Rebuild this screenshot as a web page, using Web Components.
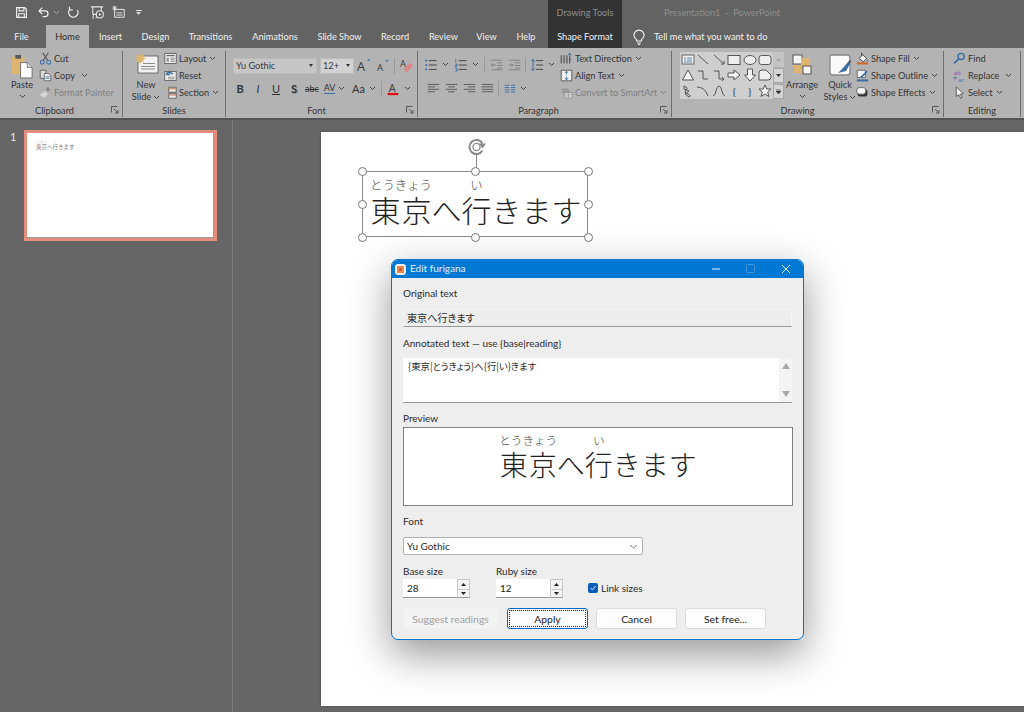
<!DOCTYPE html>
<html lang="en">
<head>
<meta charset="utf-8">
<title>Presentation1 - PowerPoint</title>
<style>
  html, body { margin: 0; height: 100%; overflow: hidden; background: #666; }
  body { font-family: Lato, "Noto Sans CJK JP", sans-serif; }
</style>
</head>
<body>
<ppt-app></ppt-app>
<script>
const UI_FONT = 'Lato, "Noto Sans CJK JP", sans-serif';
const UI_SIZE = '9.2px';
const DLG_SIZE = '10px';
const BLUE = '#3c6ea5', DK = '#3a3a3a', TAN = '#dcb670';

// all 16x16 unless noted
const ICONS = {
  save: `<path d="M2 2h10l2 2v10H2z" fill="none" stroke="#f2f2f2" stroke-width="1.4"/><path d="M5 2.500v3.500h6V2.500M4.500 14V9.500h7V14" fill="none" stroke="#f2f2f2" stroke-width="1.300"/>`,
  undo: `<path d="M3 6h7a3.500 3.500 0 0 1 0 7H7" fill="none" stroke="#f2f2f2" stroke-width="1.500"/><path d="M6.500 2L2.500 6l4 4" fill="none" stroke="#f2f2f2" stroke-width="1.500"/>`,
  redo: `<path d="M4 3.500A5.800 5.800 0 1 0 12.800 5" fill="none" stroke="#f2f2f2" stroke-width="1.500"/><path d="M3 1v4h4" fill="none" stroke="#f2f2f2" stroke-width="1.300"/>`,
  present: `<path d="M1 2h13M3 2v8h4M12 2v4" fill="none" stroke="#e8e8e8" stroke-width="1.100"/><circle cx="10.500" cy="10" r="3.800" fill="none" stroke="#e8e8e8" stroke-width="1.100"/><path d="M9.500 8.200l2.800 1.800-2.800 1.800z" fill="#e8e8e8"/><path d="M6 13.500h2M4 10l-1 5" stroke="#e8e8e8" fill="none"/>`,
  qat: `<path d="M3 5h11v9H3z" fill="none" stroke="#e8e8e8" stroke-width="1.100"/><path d="M5 9h7M5 11.500h7" stroke="#e8e8e8"/><path d="M3 1v5M.5 3.500h5" stroke="#e8e8e8" stroke-width="1.100"/><path d="M1 1l4 5M5 1L1 6" stroke="#e8e8e8" stroke-width=".7"/>`,
  paste: `<rect x="1" y="3" width="13" height="18" rx="1" fill="${TAN}"/><rect x="4.500" y="1" width="6" height="4" fill="#5a5a5a"/><path d="M10 9h7l5 5v11H10z" fill="#fff" stroke="#555" stroke-width=".8"/><path d="M17 9v5h5" fill="#ddd" stroke="#555" stroke-width=".8"/>`,
  cut: `<path d="M4.500 1l6 9M11.500 1l-6 9" stroke="#555" stroke-width="1.300"/><circle cx="4" cy="12.500" r="2.400" fill="none" stroke="${BLUE}" stroke-width="1.300"/><circle cx="12" cy="12.500" r="2.400" fill="none" stroke="${BLUE}" stroke-width="1.300"/>`,
  copy: `<path d="M1.500 1.500h7v10h-7z" fill="#ddd" stroke="#555"/><path d="M6.500 5.500h5l3 3v6h-8z" fill="#f2f2f2" stroke="#555"/><path d="M8 9.500h5M8 11.500h5" stroke="${BLUE}"/>`,
  painter: `<path d="M1 11l6-5 4 4-5 4z" fill="#d8d8d8"/><path d="M8 4l3-3 3 3-3 3z" fill="#8a8a8a"/>`,
  newslide: `<rect x="3" y="3" width="20" height="17" fill="#f2f2f2" stroke="#555" stroke-width=".8"/><path d="M8 10.500h12M6 13.500h14M6 16h14" stroke="#8a8a8a"/><path d="M5 0l1.500 2.500L9 1.500 8 4l2.500 1.500L8 7l1 2.500-2.500-1L5 11 3.500 8.500 1 9.500 2 7-.5 5.500 2 4 1 1.500l2.500 1z" fill="${TAN}"/>`,
  layout: `<rect x="1" y="2" width="14" height="12" fill="#efefef" stroke="#555"/><path d="M3 4.500h10" stroke="#555" stroke-width="1.300"/><path d="M3 7h3v5H3z" fill="#999"/><path d="M8 7.500h5M8 9.500h5M8 11.500h5" stroke="#777"/>`,
  reset: `<rect x="1" y="3" width="14" height="11" fill="#efefef" stroke="#555"/><path d="M3 6a4 4 0 0 1 6-1l2 1.500" fill="none" stroke="${BLUE}" stroke-width="1.800"/><path d="M6.500 2v5h-4" fill="none" stroke="${BLUE}" stroke-width="1.500"/><path d="M5 10h8M5 12h8" stroke="#888"/>`,
  section: `<rect x="6" y="1.500" width="9" height="6" fill="#efefef" stroke="#555"/><rect x="6" y="9" width="9" height="6" fill="#efefef" stroke="#555"/><path d="M6 3.500h9M6 11h9" stroke="#c36a3c" stroke-width="1.200"/><path d="M1 2h4M1 4h3" stroke="${TAN}" stroke-width="1.400"/>`,
  growA: `<text x="0" y="14" font-size="13.500" font-family="Open Sans" fill="${DK}">A</text><path d="M10.500 3l2-2 2 2z" fill="${BLUE}"/>`,
  shrinkA: `<text x="1" y="14" font-size="11" font-family="Open Sans" fill="${DK}">A</text><path d="M10.500 1l2 2 2-2z" fill="${BLUE}"/>`,
  eraser: `<text x="1" y="10" font-size="10" font-family="Open Sans" fill="${DK}">A</text><path d="M5 12l6-7 4 3-6 7H7z" fill="#d88a8a"/>`,
  colorA: `<text x="3" y="11.500" font-size="12.500" font-family="Open Sans" fill="${DK}">A</text><rect x="2" y="12.500" width="12" height="2.500" fill="#e60012"/>`,
  bullets: `<path d="M5.500 3h9M5.500 8h9M5.500 13h9" stroke="#444" stroke-width="1.100"/><path d="M1.500 2h2v2h-2zM1.500 7h2v2h-2zM1.500 12h2v2h-2z" fill="${BLUE}"/>`,
  numbers: `<path d="M5.500 3h9M5.500 8h9M5.500 13h9" stroke="#444" stroke-width="1.100"/><path d="M2 1v4M1.500 7h2v1.500h-2V10h2M1.500 12h2v3h-2" fill="none" stroke="${BLUE}"/>`,
  outdent: `<path d="M1 2.500h13M8 5.500h6M8 8.500h6M8 11.500h6M1 13.500h13" stroke="#7d7d7d"/><path d="M6.500 8H1.500M3.500 6l-2 2 2 2" fill="none" stroke="#7d7d7d"/>`,
  indent: `<path d="M1 2.500h13M8 5.500h6M8 8.500h6M8 11.500h6M1 13.500h13" stroke="#7d7d7d"/><path d="M1 8h5M4 6l2 2-2 2" fill="none" stroke="#7d7d7d"/>`,
  spacing: `<path d="M7 3h8M7 8h8M7 13h8" stroke="#444" stroke-width="1.100"/><path d="M3.500 2v12M1.500 4l2-2.500 2 2.500M1.500 12l2 2.500 2-2.500" fill="none" stroke="${BLUE}" stroke-width="1.100"/>`,
  left: `<path d="M1 3h14M1 6h9M1 9h14M1 12h9" stroke="#555" stroke-width="1.100"/>`,
  center: `<path d="M1 3h14M4 6h8M1 9h14M4 12h8" stroke="#555" stroke-width="1.100"/>`,
  right: `<path d="M1 3h14M6 6h9M1 9h14M6 12h9" stroke="#555" stroke-width="1.100"/>`,
  justify: `<path d="M1 3h14M1 6h14M1 9h14M1 12h14" stroke="#555" stroke-width="1.100"/>`,
  cols: `<path d="M1 3h6M9 3h6M1 6h6M9 6h6M1 9h6M9 9h6M1 12h6M9 12h6" stroke="${BLUE}" stroke-width="1.200"/>`,
  textdir: `<path d="M1.500 4v10M5 4v10M8.500 4v10M12 5v9" stroke="#333" stroke-width="1.100"/><path d="M9.500 4l2.500-3 2.500 3" fill="${BLUE}"/><path d="M11 9h3" stroke="${BLUE}"/>`,
  aligntext: `<path d="M1.500 1.500h13v13h-13" fill="#f2f2f2" stroke="#444"/><path d="M1.500 1.500v13" stroke="#444"/><path d="M8 3v4M8 9v4M6 5l2-2.500L10 5M6 11l2 2.500 2-2.500" fill="none" stroke="${BLUE}"/>`,
  smartart: `<path d="M1 3h8l3 3-3 3H1l2-3z" fill="#9a9a9a"/><rect x="6" y="8" width="9" height="7" fill="#d8d8d8" stroke="#8a8a8a"/><path d="M8 10.500h5M8 12.500h5M10.500 9v5" stroke="#8a8a8a" stroke-width=".7"/>`,
  arrange: `<rect x="1" y="1" width="9" height="9" fill="#f6f6f6" stroke="#555"/><rect x="9" y="4" width="9" height="8" fill="${TAN}"/><rect x="2" y="11" width="7" height="8" fill="${TAN}"/><rect x="11" y="12" width="8" height="8" fill="#f6f6f6" stroke="#555"/>`,
  quick: `<path d="M3 1h15q3 0 3 3v14q0 3-3 3H4q-3 0-3-3V3q0-2 2-2z" fill="#fafafa" stroke="#888" stroke-width="1.300"/><path d="M9 19l5-5 5-6 2 2-4 7z" fill="${BLUE}"/><path d="M19 8l2-2 1 1-2 3z" fill="#444"/>`,
  fill: `<path d="M4 8l4-5 5 5-4 4z" fill="#f4f4f4" stroke="#333"/><path d="M7 1v4" stroke="#333"/><path d="M14 9q1 2 0 3t-1-1z" fill="${BLUE}"/><rect x="1" y="12.800" width="14" height="2.500" fill="#d0672a"/>`,
  outline: `<path d="M1.500 1.500h10v9h-10z" fill="#f0f0f0" stroke="#555"/><path d="M6 9l7-7 1.500 1.500-7 7-2 .5z" fill="${BLUE}"/><rect x="1" y="12.800" width="14" height="2.500" fill="${BLUE}"/>`,
  effects: `<rect x="2" y="4" width="12" height="9" rx="3" fill="#333"/><rect x="1" y="2" width="11" height="8" rx="3" fill="#f6f6f6" stroke="#555"/>`,
  find: `<circle cx="10" cy="5.500" r="3.800" fill="none" stroke="${BLUE}" stroke-width="1.800"/><path d="M7 8.500L1.500 14" stroke="${BLUE}" stroke-width="2.200"/>`,
  replace: `<text x="1" y="7" font-size="7.500" font-family="Open Sans" fill="#8a4fa0">ab</text><text x="6" y="16" font-size="7.500" font-family="Open Sans" fill="${BLUE}">ac</text><path d="M0 11h4M2.500 9l2 2-2 2" fill="none" stroke="${BLUE}"/>`,
  select: `<path d="M4 1v12l3-2.500L9.500 15l1.800-1-2.300-4 3.500-.5z" fill="#f4f4f4" stroke="#444"/>`,
  launcher: `<path d="M.5 .5h6M.5 .5v6" stroke="#555" fill="none"/><path d="M3 3l4 4M7 4v3H4" stroke="#555" fill="none"/>`,
  chev: `<path d="M1 1l2.500 2.500L6 1" fill="none" stroke="currentColor" stroke-width="1"/>`,
  bulb: `<path d="M4.500 10.500a5 5 0 1 1 5 0v1.500h-5z" fill="none" stroke="#efefef" stroke-width="1.100"/><path d="M5 14h4M6 15.500h2" stroke="#efefef"/>`
};

function iconSvg(name, size, box) {
  const b = box || size || 16, s = size || 16;
  return `<svg width="${s}" height="${s}" viewBox="0 0 ${b} ${b}" style="display:block;overflow:visible">${ICONS[name]}</svg>`;
}
const chevSvg = `<svg width="7" height="5" viewBox="0 0 7 5" style="display:block">${ICONS.chev}</svg>`;

class PptApp extends HTMLElement {
  constructor() { super(); this.attachShadow({ mode: 'open' }); }
  connectedCallback() {
    this.shadowRoot.innerHTML = `
      <style>
        :host { display: flex; flex-direction: column; width: 1024px; height: 712px; overflow: hidden; background: #666; position: relative; font-family: ${UI_FONT}; }
        .work { flex: 1; display: flex; min-height: 0; }
      </style>
      <ppt-titlebar></ppt-titlebar>
      <ppt-tabs></ppt-tabs>
      <ppt-ribbon></ppt-ribbon>
      <div class="work">
        <slide-panel></slide-panel>
        <slide-stage></slide-stage>
      </div>
      <furigana-dialog></furigana-dialog>`;
  }
}

class PptTitlebar extends HTMLElement {
  constructor() { super(); this.attachShadow({ mode: 'open' }); }
  connectedCallback() {
    this.shadowRoot.innerHTML = `
      <style>
        :host { display: flex; height: 24px; background: #636363; align-items: center; font-size: ${UI_SIZE}; color: #8f8f8f; }
        .qat { width: 548px; display: flex; align-items: center; padding-left: 15px; box-sizing: border-box; color: #ccc; }
        .qat > * { flex: none; }
        .tools { width: 74px; height: 100%; background: #333; color: #8e8e8e; display: flex; align-items: center; justify-content: center; }
        .doc { margin-left: 42px; }
      </style>
      <div class="qat">
        <span style="width:13px">${iconSvg('save', 13, 16)}</span>
        <span style="width:13px;margin-left:9px">${iconSvg('undo', 13, 16)}</span>
        <span style="margin-left:3px;color:#aaa">${chevSvg}</span>
        <span style="width:13px;margin-left:7px">${iconSvg('redo', 13, 16)}</span>
        <span style="width:15px;margin-left:10px">${iconSvg('present', 15, 16)}</span>
        <span style="width:14px;margin-left:7px">${iconSvg('qat', 14, 16)}</span>
        <span style="margin-left:10px;width:6px;height:5px;display:block;border-top:1px solid #ddd;position:relative;top:1px"><svg width="5" height="3" style="display:block;margin-top:1px"><path d="M0 0h5L2.500 3z" fill="#ddd"/></svg></span>
      </div>
      <div class="tools">Drawing Tools</div>
      <div class="doc">Presentation1&nbsp; -&nbsp; PowerPoint</div>`;
  }
}

class PptTabs extends HTMLElement {
  constructor() { super(); this.attachShadow({ mode: 'open' }); }
  connectedCallback() {
    const tabs = [['File', 43], ['Home', 43, 1], ['Insert', 43], ['Design', 47], ['Transitions', 63], ['Animations', 66], ['Slide Show', 63], ['Record', 48], ['Review', 49], ['View', 37], ['Help', 42]];
    const html = tabs.map(([t, w, on]) => `<span class="tab${on ? ' on' : ''}" style="width:${w}px">${t}</span>`).join('');
    this.shadowRoot.innerHTML = `
      <style>
        :host { display: flex; height: 24px; background: #636363; color: #f0f0f0; font-size: ${UI_SIZE}; align-items: stretch; }
        .tabs { width: 548px; display: flex; align-items: stretch; flex: none; }
        .tab { white-space: nowrap; display: flex; align-items: center; justify-content: center; flex: none; }
        .on { margin-left: 3px; margin-top: 1px; background: #b3b3b3; color: #2e2e2e; }
        .fmt { width: 74px; flex: none; background: #333; display: flex; align-items: center; justify-content: center; white-space: nowrap; }
        .tell { display: flex; align-items: center; margin-left: 10px; white-space: nowrap; }
        .tell svg { margin-right: 8px; }
      </style>
      <div class="tabs">${html}</div>
      <div class="fmt">Shape Format</div>
      <div class="tell">${iconSvg('bulb', 14, 14)}<span>Tell me what you want to do</span></div>`;
  }
}

// small row: icon + label + optional chevron
class RbBtn extends HTMLElement {
  constructor() { super(); this.attachShadow({ mode: 'open' }); }
  connectedCallback() {
    const off = this.hasAttribute('off');
    this.shadowRoot.innerHTML = `
      <style>
        :host { display: flex; flex: none; align-items: center; height: 17px; white-space: nowrap; color: ${off ? '#7f7f7f' : '#333'}; font-size: ${UI_SIZE}; }
        .i { width: 13px; flex: none; margin-right: 2px; }
        .c { margin-left: ${this.getAttribute('cg') || 3}px; color: ${off ? '#7f7f7f' : '#444'}; }
      </style>
      <span class="i">${iconSvg(this.getAttribute('icon'), 13, 16)}</span>
      <span><slot></slot></span>
      ${this.hasAttribute('chev') ? `<span class="c">${chevSvg}</span>` : ''}`;
  }
}

// tall button: icon on top, one or two text lines, chevron
class RbLarge extends HTMLElement {
  constructor() { super(); this.attachShadow({ mode: 'open' }); }
  connectedCallback() {
    const s = +this.getAttribute('size'), b = +this.getAttribute('box');
    const two = this.getAttribute('two');
    this.shadowRoot.innerHTML = `
      <style>
        :host { display: flex; flex-direction: column; align-items: center; color: #333; font-size: ${UI_SIZE}; line-height: 12px; white-space: nowrap; height: 51px; width: ${this.getAttribute('w')}px; flex: none; }
        .i { height: 24px; flex: none; margin-top: ${this.getAttribute('top') || 0}px; }
        .l { margin-top: ${this.getAttribute('lt') || 1}px; }
        .r { display: flex; align-items: center; gap: 2px; height: 12px; color: #444; }
      </style>
      <div class="i">${iconSvg(this.getAttribute('icon'), s, b)}</div>
      <div class="l"><slot></slot></div>
      <div class="r">${two ? `<span style="color:#333">${two}</span>` : ''}${chevSvg}</div>`;
  }
}

// single icon cell for the font and paragraph rows
class RbTool extends HTMLElement {
  constructor() { super(); this.attachShadow({ mode: 'open' }); }
  connectedCallback() {
    const name = this.getAttribute('icon');
    const w = this.getAttribute('w') || 18;
    this.shadowRoot.innerHTML = `
      <style>
        :host { display: flex; align-items: center; justify-content: center; gap: 2px; height: 17px; width: ${w}px; flex: none; color: #333; font-size: 11px; font-weight: ${this.getAttribute('fw') || 400}; font-style: ${this.getAttribute('fs') || 'normal'}; text-decoration: ${this.getAttribute('td') || 'none'}; white-space: nowrap; }
        .c { color: #444; margin-left: 2px; }
      </style>
      ${name ? iconSvg(name, +(this.getAttribute('iw') || 13), 16) : '<slot></slot>'}
      ${this.hasAttribute('chev') ? `<span class="c">${chevSvg}</span>` : ''}`;
  }
}

class RbGroup extends HTMLElement {
  constructor() { super(); this.attachShadow({ mode: 'open' }); }
  connectedCallback() {
    const launcher = this.hasAttribute('launcher');
    this.shadowRoot.innerHTML = `
      <style>
        :host { display: flex; flex-direction: column; flex: none; box-sizing: border-box; position: relative; height: 66px; margin-top: 3px; border-right: 1px solid #6e6e6e; width: ${this.getAttribute('w')}px; }
        .body { flex: 1; min-height: 0; display: flex; padding-left: ${this.getAttribute('pl') || 0}px; }
        .cap { height: 15px; line-height: 18px; text-align: center; color: #333; font-size: ${UI_SIZE}; padding-right: ${this.getAttribute('cr') || 0}px; }
        .launch { position: absolute; right: 3px; bottom: 3px; width: 8px; height: 8px; }
      </style>
      <div class="body"><slot></slot></div>
      <div class="cap">${this.getAttribute('label')}</div>
      ${launcher ? `<span class="launch">${iconSvg('launcher', 8, 8)}</span>` : ''}`;
  }
}

class PptRibbon extends HTMLElement {
  constructor() { super(); this.attachShadow({ mode: 'open' }); }
  connectedCallback() {
    const shapes = [
      '<rect x="1" y="2" width="12" height="9" fill="#efefef" stroke="#666"/><path d="M3 5h2M3 7h2M6 5h5M6 7h5M3 9h8" stroke="'+BLUE+'" stroke-width=".8"/>',
      '<path d="M2 2l10 9" stroke="#555"/>',
      '<path d="M2 2l10 9M12 8v3H9" stroke="#555" fill="none"/>',
      '<rect x="1" y="2.500" width="12" height="9" fill="#efefef" stroke="#555"/>',
      '<ellipse cx="7" cy="7" rx="6" ry="4.500" fill="#efefef" stroke="#555"/>',
      '<rect x="1" y="2.500" width="12" height="9" rx="2.500" fill="#efefef" stroke="#555"/>',
      '<path d="M7 2l5.500 10h-11z" fill="#f4f4f4" stroke="#555"/>',
      '<path d="M2 3h5v8h5" fill="none" stroke="#555"/>',
      '<path d="M2 3h5v8h5M10 9l2 2-2 2" fill="none" stroke="#555"/>',
      '<path d="M1 5h6V2l6 5-6 5V9H1z" fill="#f4f4f4" stroke="#555"/>',
      '<path d="M4.500 1h5v6h3L7 13 1.500 7h3z" fill="#f4f4f4" stroke="#555"/>',
      '<path d="M1 12V5q0-3 3-3h4l5 5v2q0 3-3 3z" fill="#efefef" stroke="#555"/>',
      '<path d="M3 2q5 2 2 4t2 4q4 2 1 3L4 10 8 7 3 5z" fill="none" stroke="#555"/>',
      '<path d="M1 3q8 0 11 9" fill="none" stroke="#555"/>',
      '<path d="M1 12q2 0 3-5t3-5 3 5 3 5" fill="none" stroke="#555"/>',
      'L', 'R',
      '<path d="M7 1l1.800 4h4.200l-3.300 3 1.200 4.500L7 10l-3.900 2.500L4.300 8 1 5h4.200z" fill="#f4f4f4" stroke="#555"/>'
    ];
    const gallery = shapes.map(s => {
      if (s === 'L') return '<span class="cell t">{</span>';
      if (s === 'R') return '<span class="cell t">}</span>';
      return `<span class="cell"><svg width="14" height="14" viewBox="0 0 14 14">${s}</svg></span>`;
    }).join('');
    this.shadowRoot.innerHTML = `
      <style>
        :host { display: flex; height: 70px; background: #b3b3b3; border-bottom: 2px solid #545454; box-sizing: content-box; font-size: ${UI_SIZE}; color: #333; }
        .col { display: flex; flex-direction: column; }
        .stack { margin-top: -1px; }
        .row { display: flex; align-items: center; }
        .combo { height: 16px; box-sizing: border-box; background: #d2d2d2; border: 1px solid #bdbdbd; display: flex; align-items: center; justify-content: space-between; padding: 0 3px 0 2px; font-size: ${UI_SIZE}; color: #3a3a3a; flex: none; }
        .tri { width: 0; height: 0; border: 2.500px solid transparent; border-top: 3px solid #333; border-bottom: 0; }
        .vsep { width: 1px; height: 16px; background: #999; flex: none; }
        .gal { display: grid; grid-template-columns: repeat(6, 15.500px); grid-auto-rows: 15.500px; background: #cfcfcf; width: 93px; height: 47px; flex: none; margin-top: 1px; }
        .cell { display: flex; align-items: center; justify-content: center; font-size: 10px; color: #333; }
        .gs { width: 11px; height: 47px; margin-top: 1px; display: grid; grid-template-rows: repeat(3, 1fr); gap: 1px; flex: none; }
        .gs span { background: #c4c4c4; display: flex; align-items: center; justify-content: center; }
        .gs span:nth-child(2), .gs span:nth-child(3) { background: #d4d4d4; border: 1px solid #a6a6a6; box-sizing: border-box; }
        svg { display: block; }
      </style>

      <rb-group w="123" label="Clipboard" launcher cr="13">
        <rb-large w="44" icon="paste" size="22" box="23" top="3">Paste</rb-large>
        <div class="col stack" style="margin-left:-5px">
          <rb-btn icon="cut">Cut</rb-btn>
          <rb-btn icon="copy" chev cg="6">Copy</rb-btn>
          <rb-btn icon="painter" off>Format Painter</rb-btn>
        </div>
      </rb-group>

      <rb-group w="103" label="Slides" pl="1">
        <rb-large w="44" icon="newslide" size="23" box="23" two="Slide" top="2" lt="2">New</rb-large>
        <div class="col stack" style="margin-left:-4px">
          <rb-btn icon="layout" chev>Layout</rb-btn>
          <rb-btn icon="reset">Reset</rb-btn>
          <rb-btn icon="section" chev>Section</rb-btn>
        </div>
      </rb-group>

      <rb-group w="192" label="Font" launcher cr="10" pl="7">
        <div class="col" style="padding-top:6px">
          <div class="row" style="gap:3px">
            <span class="combo" style="width:84px;background:#c6c6c6"><span>Yu Gothic</span><span class="tri"></span></span>
            <span class="combo" style="width:34px"><span>12+</span><span class="tri"></span></span>
            <rb-tool icon="growA" iw="15" style="margin-left:-2px"></rb-tool>
            <rb-tool icon="shrinkA" iw="14" style="margin-left:-2px"></rb-tool>
            <span class="vsep" style="margin-left:-1px"></span>
            <rb-tool icon="eraser" iw="15" style="margin-left:-1px"></rb-tool>
          </div>
          <div class="row" style="margin-top:6px;margin-left:-2px">
            <rb-tool fw="700">B</rb-tool>
            <rb-tool fs="italic">I</rb-tool>
            <rb-tool td="underline">U</rb-tool>
            <rb-tool fw="700" style="text-shadow:1px 1px 0 #888">S</rb-tool>
            <rb-tool style="font-size:9px;text-decoration:line-through">abc</rb-tool>
            <rb-tool w="17"><span style="font-size:9px;border-bottom:1px solid ${BLUE};line-height:10px">AV</span></rb-tool>
            <span style="color:#444">${chevSvg}</span>
            <rb-tool w="28" style="margin-left:5px" chev>Aa</rb-tool>
            <span class="vsep" style="margin-left:3px"></span>
            <rb-tool icon="colorA" iw="14" style="margin-left:4px" chev w="25"></rb-tool>
          </div>
        </div>
      </rb-group>

      <rb-group w="254" label="Paragraph" launcher cr="12" pl="6">
        <div class="col" style="padding-top:5px;width:134px;flex:none">
          <div class="row">
            <rb-tool icon="bullets" iw="14" w="25" chev></rb-tool>
            <rb-tool icon="numbers" iw="14" w="25" chev style="margin-left:5px"></rb-tool>
            <span class="vsep" style="margin-left:5px"></span>
            <rb-tool icon="outdent" iw="14" style="margin-left:3px"></rb-tool>
            <rb-tool icon="indent" iw="14"></rb-tool>
            <span class="vsep" style="margin-left:1px"></span>
            <rb-tool icon="spacing" iw="14" w="25" style="margin-left:4px" chev></rb-tool>
          </div>
          <div class="row" style="margin-top:7px">
            <rb-tool icon="left" iw="13"></rb-tool>
            <rb-tool icon="center" iw="13"></rb-tool>
            <rb-tool icon="right" iw="13"></rb-tool>
            <rb-tool icon="justify" iw="13"></rb-tool>
            <span class="vsep" style="margin-left:2px"></span>
            <rb-tool icon="cols" iw="12" w="23" style="margin-left:5px" chev></rb-tool>
          </div>
        </div>
        <div class="col stack" style="margin-left:2px">
          <rb-btn icon="textdir" chev>Text Direction</rb-btn>
          <rb-btn icon="aligntext" chev>Align Text</rb-btn>
          <rb-btn icon="smartart" off chev>Convert to SmartArt</rb-btn>
        </div>
      </rb-group>

      <rb-group w="272" label="Drawing" launcher cr="20" pl="8">
        <div class="gal">${gallery}</div>
        <div class="gs">
          <span><svg width="5" height="3"><path d="M0 3h5L2.500 0z" fill="#a0a0a0"/></svg></span>
          <span><svg width="5" height="3"><path d="M0 0h5L2.500 3z" fill="#333"/></svg></span>
          <span><svg width="5" height="5"><path d="M0 0h5M0 2h5L2.500 5z" stroke="#333" stroke-width=".6" fill="#333"/></svg></span>
        </div>
        <rb-large w="38" icon="arrange" size="20" box="20" top="3" style="margin-left:-1px">Arrange</rb-large>
        <rb-large w="38" icon="quick" size="23" box="23" top="3" two="Styles">Quick</rb-large>
        <div class="col stack" style="margin-left:-3px">
          <rb-btn icon="fill" chev>Shape Fill</rb-btn>
          <rb-btn icon="outline" chev>Shape Outline</rb-btn>
          <rb-btn icon="effects" chev>Shape Effects</rb-btn>
        </div>
      </rb-group>

      <rb-group w="77" label="Editing" pl="9">
        <div class="col stack">
          <rb-btn icon="find">Find</rb-btn>
          <rb-btn icon="replace" chev cg="6">Replace</rb-btn>
          <rb-btn icon="select" chev>Select</rb-btn>
        </div>
      </rb-group>`;
  }
}

class SlidePanel extends HTMLElement {
  constructor() { super(); this.attachShadow({ mode: 'open' }); }
  connectedCallback() {
    this.shadowRoot.innerHTML = `
      <style>
        :host { display: flex; width: 233px; flex: none; box-sizing: border-box; border-right: 1px solid #7d7d7d; background: #666; padding: 10px 0 0 10px; align-items: flex-start; }
        .n { color: #e4e4e4; font-size: 11px; width: 14px; line-height: 14px; }
        .thumb { width: 193px; height: 111px; box-sizing: border-box; border: 3px solid #e58d7c; background: #fff; box-shadow: inset -1px -1px 0 #9a9a9a; padding: 11px 0 0 9px; font-size: 5.500px; line-height: 7px; color: #777; font-family: "Noto Sans CJK JP", sans-serif; }
        rt { font-size: 2.200px; color: #aaa; }
      </style>
      <span class="n">1</span>
      <div class="thumb"><ruby>東京<rt>とうきょう</rt></ruby>へ<ruby>行<rt>い</rt></ruby>きます</div>`;
  }
}

class RubyLine extends HTMLElement {
  constructor() { super(); this.attachShadow({ mode: 'open' }); }
  connectedCallback() {
    const base = this.getAttribute('base'), rt = this.getAttribute('rt'), up = this.getAttribute('up');
    this.shadowRoot.innerHTML = `
      <style>
        :host { display: block; font-family: "Noto Sans CJK JP", sans-serif; font-weight: 300; color: #222; white-space: nowrap; line-height: 1; font-size: ${base}px; }
        rt { font-size: ${rt}px; color: #444; font-weight: 300; line-height: 1.2; position: relative; top: -${up}px; }
      </style>
      <ruby>東京<rt>とうきょう</rt></ruby>へ<ruby>行<rt>い</rt></ruby>きます`;
  }
}

class SlideStage extends HTMLElement {
  constructor() { super(); this.attachShadow({ mode: 'open' }); }
  connectedCallback() {
    const pts = [[0,0],[113,0],[226,0],[0,33],[226,33],[0,66],[113,66],[226,66]];
    const handles = pts.map(([x,y]) => `<span class="h" style="left:${x-5}px;top:${y-5}px"></span>`).join('');
    this.shadowRoot.innerHTML = `
      <style>
        :host { flex: 1; min-width: 0; display: flex; background: #666; padding: 12px 0 6px 88px; box-sizing: border-box; }
        .slide { flex: 1; background: #fff; position: relative; box-shadow: 0 0 2px #444; }
        .shape { position: absolute; left: 41px; top: 39px; width: 226px; height: 66px; border: 1px solid #8a8a8a; box-sizing: border-box; }
        .h { position: absolute; width: 9px; height: 9px; box-sizing: border-box; border: 1.300px solid #777; border-radius: 50%; background: #fff; }
        .rotline { position: absolute; left: 113px; top: -17px; height: 17px; width: 1px; background: #8a8a8a; }
        .rot { position: absolute; left: 104px; top: -34px; width: 20px; height: 18px; }
        ruby-line { position: absolute; left: 7px; top: 10px; }
      </style>
      <div class="slide">
        <div class="shape">
          <ruby-line base="30" rt="12.400" up="3"></ruby-line>
          <span class="rotline"></span>
          <svg class="rot" viewBox="0 0 20 18"><path d="M15.500 5.500A7 7 0 1 0 15.500 12.500" fill="none" stroke="#8a8a8a" stroke-width="2"/><circle cx="9.500" cy="9" r="3.600" fill="none" stroke="#8a8a8a" stroke-width="1.300"/><path d="M12 5.500h7l-3.500 5z" fill="#8a8a8a"/></svg>
          ${handles}
        </div>
      </div>`;
  }
}

class DlgButton extends HTMLElement {
  constructor() { super(); this.attachShadow({ mode: 'open' }); }
  connectedCallback() {
    const off = this.hasAttribute('off'), focus = this.hasAttribute('focus');
    this.shadowRoot.innerHTML = `
      <style>
        :host { display: flex; align-items: center; justify-content: center; box-sizing: border-box; height: 21px; width: ${this.getAttribute('w')}px; flex: none; border-radius: 3px; font-size: 10.400px; position: relative;
          background: ${off ? '#f3f3f3' : '#fdfdfd'}; color: ${off ? '#a0a0a0' : '#222'}; border: 1px solid ${focus ? '#0067c0' : off ? '#f0f0f0' : '#dcdcdc'}; }
        .dots { position: absolute; inset: 1px; border: 1px dotted #222; ${focus ? '' : 'display:none;'} }
      </style>
      <span class="dots"></span><slot></slot>`;
  }
}

class DlgSpin extends HTMLElement {
  constructor() { super(); this.attachShadow({ mode: 'open' }); }
  connectedCallback() {
    this.shadowRoot.innerHTML = `
      <style>
        :host { display: flex; width: 67px; height: 19px; box-sizing: border-box; font-size: ${DLG_SIZE}; color: #222; flex: none; }
        .v { flex: 1; background: #fff; border-bottom: 1px solid #999; padding-left: 4px; line-height: 18px; }
        .b { width: 13px; display: grid; grid-template-rows: 1fr 1fr; border: 1px solid #c8c8c8; border-bottom-color: #999; box-sizing: border-box; background: #f4f4f4; }
        .b span { display: flex; align-items: center; justify-content: center; }
        .b span + span { border-top: 1px solid #c8c8c8; }
      </style>
      <div class="v"><slot></slot></div>
      <div class="b">
        <span><svg width="5" height="3"><path d="M0 3h5L2.500 0z" fill="#222"/></svg></span>
        <span><svg width="5" height="3"><path d="M0 0h5L2.500 3z" fill="#222"/></svg></span>
      </div>`;
  }
}

class FuriganaDialog extends HTMLElement {
  constructor() { super(); this.attachShadow({ mode: 'open' }); }
  connectedCallback() {
    this.shadowRoot.innerHTML = `
      <style>
        :host { position: absolute; left: 391px; top: 259px; width: 413px; height: 381px; box-sizing: border-box; display: flex; flex-direction: column; border: 1px solid #0078d4; border-radius: 7px; overflow: hidden; background: #eee; font-size: ${DLG_SIZE}; color: #2a2a2a; font-family: ${UI_FONT}; box-shadow: 0 14px 40px rgba(0,0,0,.42); }
        .cap { height: 18px; flex: none; background: #0078d4; color: #e3f0fa; display: flex; align-items: center; padding-left: 3px; }
        .cap .app { width: 11px; height: 11px; border-radius: 3px; background: #eee; display: flex; align-items: center; justify-content: center; margin-right: 4px; }
        .cap .app i { display: block; width: 7px; height: 7px; background: #d2552c; border-radius: 1px; box-shadow: inset 0 0 0 2px #e98a4c; }
        .cap .ttl { flex: 1; padding-bottom: 2px; }
        .ctrl { width: 35px; display: flex; justify-content: center; }
        .body { flex: 1; padding: 9px 11px 0; display: flex; flex-direction: column; min-height: 0; }
        .lab { height: 14px; line-height: 12px; flex: none; }
        .jp { font-family: "Noto Sans CJK JP", sans-serif; font-feature-settings: "palt"; }
        .ro { height: 18px; margin-top: 8px; background: #ededed; border: 1px solid #f5f5f5; border-bottom: 1px solid #9a9a9a; box-sizing: border-box; padding-left: 3px; line-height: 16px; font-size: 10.100px; flex: none; }
        .area { height: 45px; margin-top: 7px; display: flex; background: #fff; border-bottom: 1px solid #999; box-sizing: border-box; flex: none; }
        .area .t { flex: 1; padding: 1px 5px; line-height: 14px; font-size: 9.400px; }
        .sb { width: 13px; background: #f4f4f4; display: flex; flex-direction: column; justify-content: space-between; align-items: center; padding: 5px 0; box-sizing: border-box; }
        .prev { height: 79px; margin-top: 1px; margin-right: -1px; background: #fff; border: 1px solid #808080; box-sizing: border-box; display: flex; justify-content: center; flex: none; padding-top: 10px; }
        .sel { width: 240px; height: 18px; box-sizing: border-box; margin-top: 8px; border: 1px solid #b0b0b0; border-radius: 2px; background: #fff; display: flex; align-items: center; justify-content: space-between; padding: 0 4px 0 3px; flex: none; }
        .sizes { display: flex; margin-top: 11px; align-items: flex-end; }
        .sz { width: 93px; display: flex; flex-direction: column; flex: none; }
        .sz .lab { height: 11px; line-height: 11px; margin-bottom: 2px; }
        .chk { display: flex; align-items: center; height: 18px; margin: 0 0 1px -1px; }
        .box { width: 10px; height: 10px; border-radius: 2px; background: #0b5cb8; display: flex; align-items: center; justify-content: center; margin-right: 3px; }
        .btns { display: flex; margin-top: 10px; }
      </style>
      <div class="cap">
        <span class="app"><i></i></span>
        <span class="ttl">Edit furigana</span>
        <span class="ctrl"><svg width="10" height="10"><path d="M1 5h8" stroke="#e3f0fa"/></svg></span>
        <span class="ctrl"><svg width="10" height="10"><rect x=".5" y=".5" width="8" height="8" rx="1" fill="none" stroke="#3f98dd"/></svg></span>
        <span class="ctrl"><svg width="10" height="10"><path d="M1 1l8 8M9 1l-8 8" stroke="#e3f0fa"/></svg></span>
      </div>
      <div class="body">
        <div class="lab">Original text</div>
        <div class="ro jp">東京へ行きます</div>
        <div class="lab" style="margin-top:10px">Annotated text — use {base|reading}</div>
        <div class="area">
          <div class="t jp">{東京|とうきょう}へ{行|い}きます</div>
          <div class="sb">
            <svg width="8" height="6"><path d="M0 6h8L4 0z" fill="#aaa"/></svg>
            <svg width="8" height="6"><path d="M0 0h8L4 6z" fill="#aaa"/></svg>
          </div>
        </div>
        <div class="lab" style="margin-top:9px">Preview</div>
        <div class="prev"><ruby-line base="28" rt="11.600" up="4"></ruby-line></div>
        <div class="lab" style="margin-top:9px">Font</div>
        <div class="sel"><span>Yu Gothic</span><svg width="9" height="5" style="color:#777"><path d="M1 1l3.500 3L8 1" fill="none" stroke="currentColor"/></svg></div>
        <div class="sizes">
          <div class="sz"><div class="lab">Base size</div><dlg-spin>28</dlg-spin></div>
          <div class="sz"><div class="lab">Ruby size</div><dlg-spin>12</dlg-spin></div>
          <div class="chk"><span class="box"><svg width="8" height="8"><path d="M1.500 4l2 2 3-4" fill="none" stroke="#cfe2f7"/></svg></span>Link sizes</div>
        </div>
        <div class="btns">
          <dlg-button w="95" off>Suggest readings</dlg-button>
          <dlg-button w="81" focus style="margin-left:9px">Apply</dlg-button>
          <dlg-button w="81" style="margin-left:8px">Cancel</dlg-button>
          <dlg-button w="81" style="margin-left:8px">Set free...</dlg-button>
        </div>
      </div>`;
  }
}

customElements.define('ppt-app', PptApp);
customElements.define('ppt-titlebar', PptTitlebar);
customElements.define('ppt-tabs', PptTabs);
customElements.define('rb-btn', RbBtn);
customElements.define('rb-large', RbLarge);
customElements.define('rb-tool', RbTool);
customElements.define('rb-group', RbGroup);
customElements.define('ppt-ribbon', PptRibbon);
customElements.define('slide-panel', SlidePanel);
customElements.define('ruby-line', RubyLine);
customElements.define('slide-stage', SlideStage);
customElements.define('dlg-button', DlgButton);
customElements.define('dlg-spin', DlgSpin);
customElements.define('furigana-dialog', FuriganaDialog);
</script>
</body>
</html>
